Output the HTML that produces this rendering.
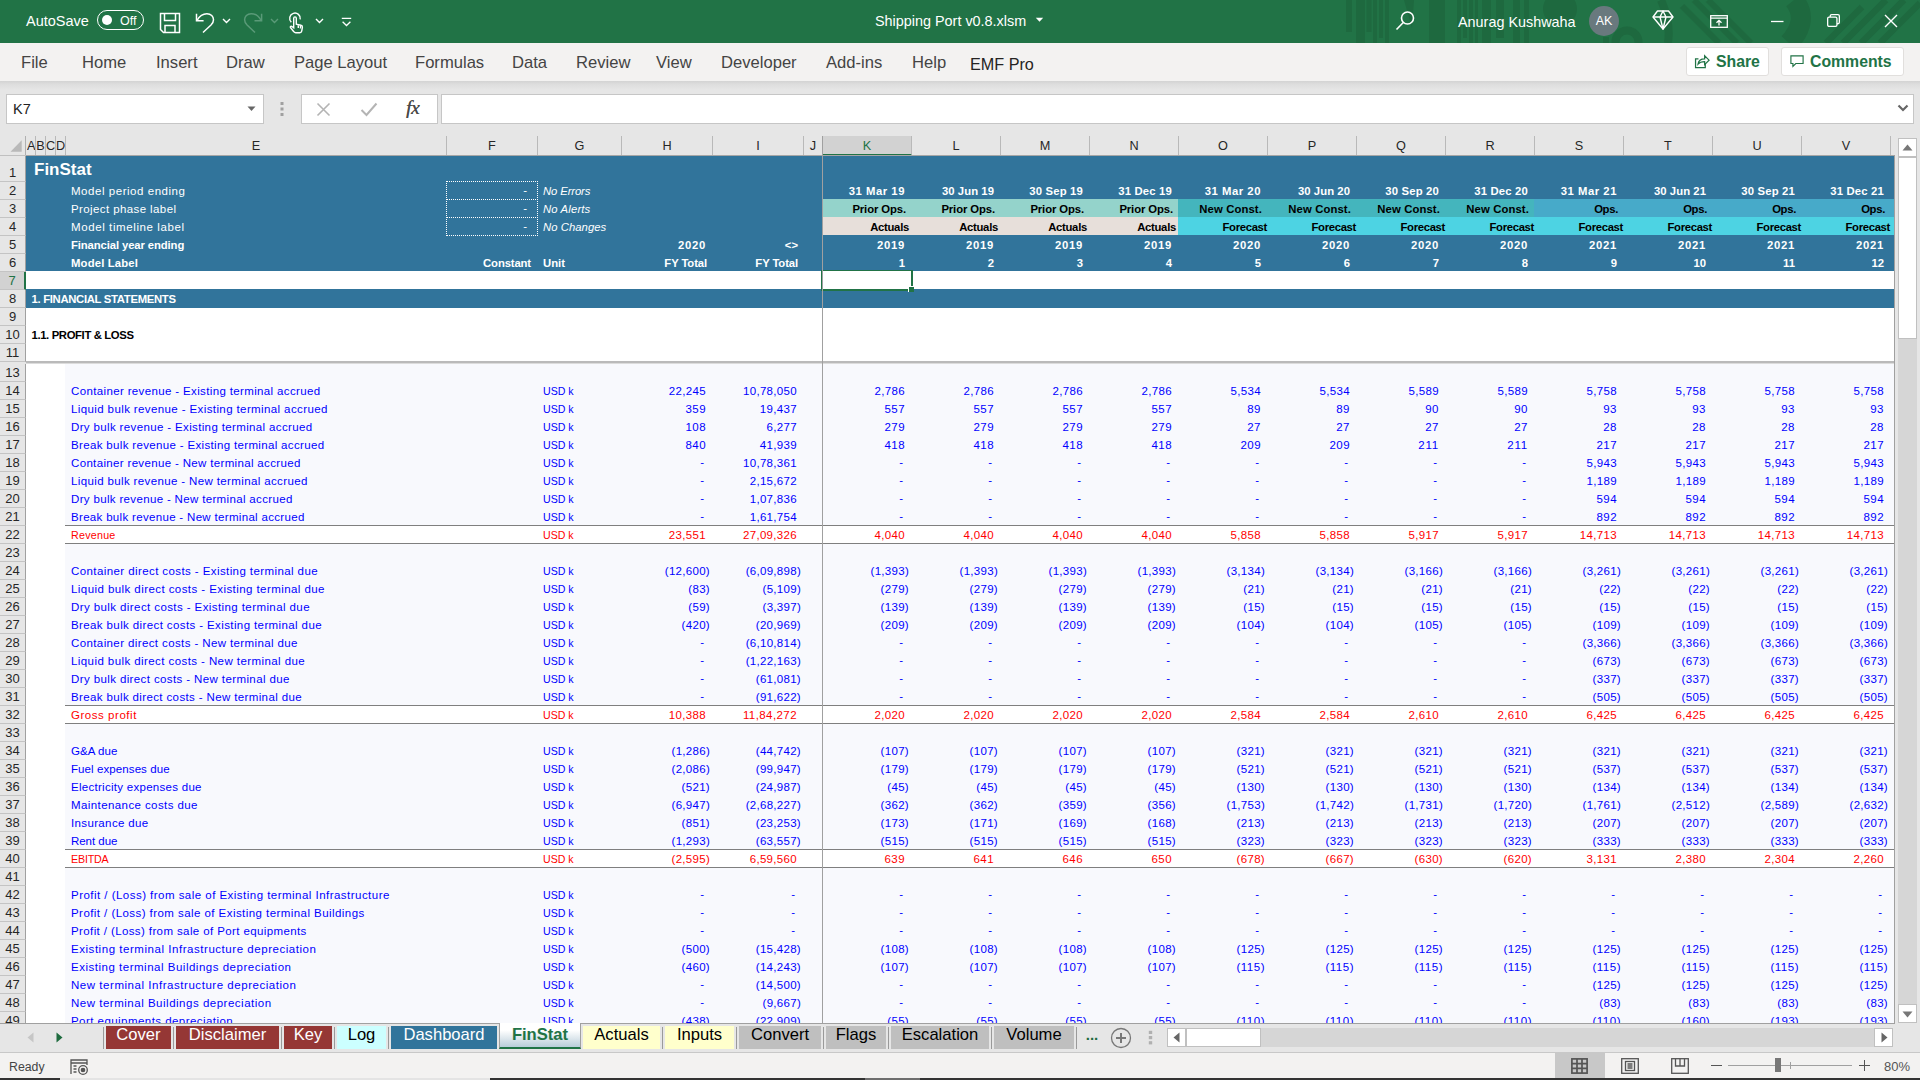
<!DOCTYPE html>
<html lang="en"><head><meta charset="utf-8"><title>Shipping Port v0.8.xlsm - Excel</title>
<style>
*{box-sizing:border-box;margin:0;padding:0}
html,body{width:1920px;height:1080px;overflow:hidden;background:#e6e6e6}
body{font-family:"Liberation Sans",sans-serif;color:#222}
#app{position:relative;width:1920px;height:1080px;overflow:hidden;background:#e6e6e6}
.abs{position:absolute}
/* title bar */
#title{position:absolute;left:0;top:0;width:1920px;height:43px;background:#217346;color:#fff;overflow:hidden}
#title .t{position:absolute;white-space:nowrap;font-size:15px;line-height:42px;top:1px}
/* ribbon tabs */
#ribbon{position:absolute;left:0;top:43px;width:1920px;height:38px;background:#f3f2f1}
#ribbon .tab{position:absolute;top:0;line-height:40px;font-size:16.6px;color:#444;white-space:nowrap}
#rshadow{position:absolute;left:0;top:81px;width:1920px;height:9px;background:linear-gradient(#d3d3d3,#dedede 40%,#e6e6e6)}
.btn{position:absolute;top:4px;height:29px;background:#fff;border:1px solid #e1dfdd;border-radius:3px;color:#217346;font-weight:bold;font-size:15.8px;line-height:28px;white-space:nowrap}
/* formula bar */
.box{position:absolute;top:94px;height:30px;background:#fff;border:1px solid #c6c6c6}
/* grid */
#grid{position:absolute;left:0;top:0;width:1920px;height:1024px;overflow:hidden}
#sheet{position:absolute;left:26px;top:155px;width:1868px;height:869px;background:#fff}
.ch{position:absolute;top:136px;height:19px;line-height:21px;text-align:center;font-size:12.7px;color:#262626;border-right:1px solid #b9b9b9;overflow:hidden;white-space:nowrap}
.ch.sel{background:#d2d2d2;color:#217346;border-bottom:2px solid #217346;height:20px}
.rh{position:absolute;left:0;width:26px;text-align:center;font-size:13px;color:#262626;border-bottom:1px solid #c4c4c4;border-right:1px solid #a0a0a0;background:#e6e6e6;overflow:hidden}
.rh.sel{background:#d2d2d2;color:#217346;border-right:2px solid #217346}
.hb{position:absolute;background:#31749b}
.lb{position:absolute;background:#f8f9fd}
.c{position:absolute;height:18px;line-height:18px;padding-top:1px;font-size:11.5px;white-space:nowrap;text-align:right;overflow:visible}
.c.l{text-align:left}
.w{color:#fff}.k{color:#000}.blu{color:#0000ff}.red{color:#ff0000}
.b{font-weight:bold;font-size:11.3px}
.i{font-style:italic;font-size:11.3px}
.u{font-size:10.6px}
.n2{font-size:10.7px}
.c.d{padding-top:0}
.r2{padding-right:2px}.r5{padding-right:5px}.r6{padding-right:6px}.r8{padding-right:8px}.r10{padding-right:10px}
.fin{font-weight:bold;font-size:17px;color:#fff;height:24px;line-height:24px}
.dot{position:absolute;border:1px dotted #fff}
.tot{position:absolute;left:65px;width:1829px;background:#fff;border-top:1px solid #7f7f7f;border-bottom:1px solid #7f7f7f;height:19px}
/* sheet tabs */
#tabs{position:absolute;left:0;top:1024px;width:1920px;height:29px;background:#e6e6e6;border-bottom:1px solid #c8c8c8}
.st{position:absolute;top:2px;height:23px;line-height:17px;font-size:16.6px;text-align:center;white-space:nowrap;color:#000}
.sep{position:absolute;top:3px;width:1px;height:22px;background:#9a9a9a}
#status{position:absolute;left:0;top:1053px;width:1920px;height:25px;background:#f3f2f1;font-size:13.5px;color:#444}
</style></head><body>
<div id="app">
<!-- TITLE BAR -->
<div id="title">
<svg class="abs" style="left:1300px;top:0" width="620" height="43" viewBox="0 0 620 43">
 <g fill="#1e693f">
  <rect x="46" y="0" width="6" height="32"/><rect x="56" y="0" width="9" height="43"/><rect x="66.500" y="0" width="5" height="32"/><rect x="73" y="0" width="4" height="43"/><rect x="79" y="0" width="4" height="38"/><rect x="85" y="0" width="4" height="43"/>
  <path d="M104 0h10l-2 28z"/>
  <rect x="129" y="0" width="16" height="43"/>
  <rect x="157" y="0" width="4" height="43"/><rect x="163" y="0" width="4" height="38"/><rect x="169" y="0" width="4" height="43"/><rect x="175" y="0" width="3" height="43"/>
  <rect x="182" y="0" width="9" height="43"/><rect x="196" y="0" width="8" height="38"/><rect x="213" y="0" width="7" height="43"/><rect x="224" y="0" width="5" height="43"/>
  <circle cx="260" cy="9" r="17"/>
  <rect x="303" y="37" width="6" height="6"/>
 </g>
 <g fill="none" stroke="#1e693f">
  <circle cx="327" cy="42" r="11.500" stroke-width="8"/>
  <path d="M361 0 Q371 22 368 43" stroke-width="8"/>
  <path d="M382 6 L419 43 M394 0 L437 43 M408 0 L451 43" stroke-width="6"/>
  <path d="M494 0 Q510 20 489 43" stroke-width="20"/>
  <path d="M526 43 L562 7 M543 43 L586 0 M561 43 L604 0 M580 43 L620 3" stroke-width="6.500"/>
 </g>
</svg>
<div class="t" style="left:26px;font-size:14.5px;top:0">AutoSave</div>
<div class="abs" style="left:97px;top:10px;width:47px;height:20px;border:1px solid #fff;border-radius:10px"></div>
<div class="abs" style="left:102px;top:15px;width:10px;height:10px;border-radius:5px;background:#fff"></div>
<div class="t" style="left:120px;font-size:12.5px;top:0">Off</div>
<!-- save -->
<svg class="abs" style="left:159px;top:12px" width="22" height="22" viewBox="0 0 22 22" fill="none" stroke="#fff" stroke-width="1.5"><path d="M1.5 1.5h19v19H4.5l-3-3z"/><path d="M5.5 1.5v7h11v-7M6 20.5v-7h10v7"/></svg>
<!-- undo -->
<svg class="abs" style="left:194px;top:11px" width="22" height="24" viewBox="0 0 22 24" fill="none" stroke="#fff" stroke-width="1.5"><path d="M2.500 2.700V9.800H9.600"/><path d="M3 9.300C5.500 5 9 2.700 12.900 2.700c4.100 0 6.600 2.800 6.600 6 0 2.300-1 3.800-2.500 5.300L9 21.500"/></svg>
<svg class="abs" style="left:222px;top:18px" width="9" height="6" viewBox="0 0 9 6" fill="none" stroke="#fff" stroke-width="1.4"><path d="M1 1l3.5 3.5L8 1"/></svg>
<!-- redo (disabled) -->
<svg class="abs" style="left:243px;top:11px" width="22" height="24" viewBox="0 0 22 24" fill="none" stroke="#5a9a78" stroke-width="1.5"><path d="M18.600 2.700V9.800H11.500"/><path d="M18.100 9.300C15.600 5 12.100 2.700 8.200 2.700c-4.100 0-6.600 2.800-6.600 6 0 2.300 1 3.800 2.500 5.300L12 21.500"/></svg>
<svg class="abs" style="left:270px;top:18px" width="9" height="6" viewBox="0 0 9 6" fill="none" stroke="#5a9a78" stroke-width="1.4"><path d="M1 1l3.500 3.500L8 1"/></svg>
<!-- touch -->
<svg class="abs" style="left:287px;top:11px" width="20" height="24" viewBox="0 0 20 24" fill="none" stroke="#fff" stroke-width="1.400"><path d="M4.300 11.200A5.300 5.300 0 1 1 13.200 8.300"/><path d="M6.700 16.800V7.200a1.300 1.300 0 0 1 2.600 0v6l4.600 1c1.200.300 1.700 1 1.500 2.200l-.700 3.800c-.200 1-.800 1.500-1.800 1.500H8.700c-.800 0-1.400-.300-1.900-1l-3.300-4.200c-.600-.800.300-1.700 1.100-1.200z"/><path d="M11.300 14.200v2.800M13.500 14.800v2.600"/></svg>
<svg class="abs" style="left:315px;top:18px" width="9" height="6" viewBox="0 0 9 6" fill="none" stroke="#fff" stroke-width="1.400"><path d="M1 1l3.500 3.500L8 1"/></svg>
<!-- customize -->
<svg class="abs" style="left:341px;top:16px" width="11" height="11" viewBox="0 0 11 11" fill="none" stroke="#fff" stroke-width="1.300"><path d="M0.800 2.400h9.400M1.600 5.800l3.900 3.700 3.900-3.700"/></svg>
<div class="t" style="left:875px;font-size:14.4px;top:0">Shipping Port v0.8.xlsm</div>
<svg class="abs" style="left:1035px;top:17px" width="9" height="6" viewBox="0 0 9 6"><path d="M0.800 0.800h7.400L4.500 4.800z" fill="#fff"/></svg>
<!-- search -->
<svg class="abs" style="left:1395px;top:10px" width="22" height="22" viewBox="0 0 22 22" fill="none" stroke="#fff" stroke-width="1.600"><circle cx="12.500" cy="8" r="6"/><path d="M8.300 12.500L1.500 19.500"/></svg>
<div class="t" style="left:1458px;font-size:14.4px">Anurag Kushwaha</div>
<div class="abs" style="left:1589px;top:6px;width:30px;height:30px;border-radius:15px;background:#69797e;color:#fff;text-align:center;line-height:30px;font-size:12.5px">AK</div>
<!-- diamond -->
<svg class="abs" style="left:1652px;top:10px" width="22" height="20" viewBox="0 0 22 20" fill="none" stroke="#fff" stroke-width="1.400" stroke-linejoin="round"><path d="M5.500 1h11l4.500 6L11 19 1 7z"/><path d="M1 7h20M8 7l3-6 3 6-3 12z"/></svg>
<!-- ribbon display -->
<svg class="abs" style="left:1710px;top:15px" width="18" height="13" viewBox="0 0 18 13" fill="none" stroke="#fff" stroke-width="1.300"><rect x="0.700" y="0.700" width="16.600" height="11.600"/><path d="M0.700 3.200h16.600M9 10.500V5.500M6.500 7.800L9 5.300l2.500 2.500"/></svg>
<!-- window controls -->
<svg class="abs" style="left:1771px;top:20px" width="13" height="3" viewBox="0 0 13 3"><path d="M0 1.500h12.500" stroke="#fff" stroke-width="1.300"/></svg>
<svg class="abs" style="left:1827px;top:14px" width="13" height="13" viewBox="0 0 14 14" fill="none" stroke="#fff" stroke-width="1.400"><rect x="0.700" y="3.300" width="10" height="10" rx="1.500"/><path d="M3.500 3.300V2.200c0-.8.700-1.500 1.500-1.500h6.800c.800 0 1.500.700 1.500 1.500V9c0 .800-.700 1.500-1.500 1.500h-1.100"/></svg>
<svg class="abs" style="left:1884px;top:14px" width="14" height="14" viewBox="0 0 14 14" stroke="#fff" stroke-width="1.400"><path d="M1 1l12 12M13 1L1 13"/></svg>
</div>
<!-- RIBBON TABS -->
<div id="ribbon">
<div class="tab" style="left:21px">File</div>
<div class="tab" style="left:82px">Home</div>
<div class="tab" style="left:156px">Insert</div>
<div class="tab" style="left:226px">Draw</div>
<div class="tab" style="left:294px">Page Layout</div>
<div class="tab" style="left:415px">Formulas</div>
<div class="tab" style="left:512px">Data</div>
<div class="tab" style="left:576px">Review</div>
<div class="tab" style="left:656px">View</div>
<div class="tab" style="left:721px">Developer</div>
<div class="tab" style="left:826px">Add-ins</div>
<div class="tab" style="left:912px">Help</div>
<div class="tab" style="left:970px;color:#252423;top:1px;font-size:16.2px">EMF Pro</div>
<div class="btn" style="left:1686px;width:83px;padding-left:29px">Share</div>
<svg class="abs" style="left:1694px;top:11px" width="16" height="15" viewBox="0 0 18 17" fill="none" stroke="#217346" stroke-width="1.400"><path d="M5 5.500H1.700v10h11v-4.300"/><path d="M4.500 11.500c.5-4 3.500-6 7.500-6V2l5 5-5 5V8.700c-3 0-5.500.500-7.500 2.800z"/></svg>
<div class="btn" style="left:1781px;width:123px;padding-left:28px">Comments</div>
<svg class="abs" style="left:1790px;top:12px" width="14" height="13" viewBox="0 0 17 16" fill="none" stroke="#217346" stroke-width="1.400"><path d="M1 1h15v9.500H7L3.500 14v-3.500H1z"/></svg>
</div>
<div id="rshadow"></div>
<!-- FORMULA BAR -->
<div class="box" style="left:6px;width:258px"></div>
<div class="abs" style="left:13px;top:95px;line-height:28px;font-size:14.5px;color:#222">K7</div>
<svg class="abs" style="left:247px;top:106px" width="9" height="6" viewBox="0 0 9 6"><path d="M0.500 0.500h8L4.500 5z" fill="#666"/></svg>
<svg class="abs" style="left:280px;top:101px" width="4" height="16" viewBox="0 0 4 16" fill="#a0a0a0"><rect x="0.500" y="1" width="3" height="3"/><rect x="0.500" y="6.500" width="3" height="3"/><rect x="0.500" y="12" width="3" height="3"/></svg>
<div class="box" style="left:301px;width:137px"></div>
<svg class="abs" style="left:316px;top:102px" width="15" height="15" viewBox="0 0 15 15" stroke="#b4b4b4" stroke-width="1.600"><path d="M1.500 1.500l12 12M13.500 1.500l-12 12"/></svg>
<svg class="abs" style="left:360px;top:102px" width="18" height="15" viewBox="0 0 18 15" fill="none" stroke="#b4b4b4" stroke-width="2"><path d="M1.500 8l5 5L16.500 1.500"/></svg>
<div class="abs" style="left:406px;top:94px;line-height:27px;font-size:19.5px;font-style:italic;font-family:'Liberation Serif',serif;color:#4a4a4a;letter-spacing:-0.5px;text-shadow:0.3px 0 0 #4a4a4a">fx</div>
<div class="box" style="left:441px;width:1473px"></div>
<svg class="abs" style="left:1897px;top:104px" width="12" height="9" viewBox="0 0 12 9" fill="none" stroke="#666" stroke-width="2.200"><path d="M1.500 1.500l4.500 4.500 4.500-4.500"/></svg>
<div id="grid">
<div id="sheet"></div>
<div class="ch" style="left:27px;width:9px">A</div>
<div class="ch" style="left:36px;width:10px">B</div>
<div class="ch" style="left:46px;width:10px">C</div>
<div class="ch" style="left:56px;width:10px">D</div>
<div class="ch" style="left:66px;width:381px">E</div>
<div class="ch" style="left:447px;width:91px">F</div>
<div class="ch" style="left:538px;width:84px">G</div>
<div class="ch" style="left:622px;width:91px">H</div>
<div class="ch" style="left:713px;width:91px">I</div>
<div class="ch" style="left:804px;width:19px">J</div>
<div class="ch sel" style="left:823px;width:89px">K</div>
<div class="ch" style="left:912px;width:89px">L</div>
<div class="ch" style="left:1001px;width:89px">M</div>
<div class="ch" style="left:1090px;width:89px">N</div>
<div class="ch" style="left:1179px;width:89px">O</div>
<div class="ch" style="left:1268px;width:89px">P</div>
<div class="ch" style="left:1357px;width:89px">Q</div>
<div class="ch" style="left:1446px;width:89px">R</div>
<div class="ch" style="left:1535px;width:89px">S</div>
<div class="ch" style="left:1624px;width:89px">T</div>
<div class="ch" style="left:1713px;width:89px">U</div>
<div class="ch" style="left:1802px;width:89px">V</div>
<div class="rh" style="top:156px;height:26px;line-height:34px">1</div>
<div class="rh" style="top:182px;height:18px;line-height:18px">2</div>
<div class="rh" style="top:200px;height:18px;line-height:18px">3</div>
<div class="rh" style="top:218px;height:18px;line-height:18px">4</div>
<div class="rh" style="top:236px;height:18px;line-height:18px">5</div>
<div class="rh" style="top:254px;height:18px;line-height:18px">6</div>
<div class="rh sel" style="top:272px;height:18px;line-height:18px">7</div>
<div class="rh" style="top:290px;height:18px;line-height:18px">8</div>
<div class="rh" style="top:308px;height:18px;line-height:18px">9</div>
<div class="rh" style="top:326px;height:18px;line-height:18px">10</div>
<div class="rh" style="top:344px;height:18px;line-height:18px">11</div>
<div class="rh" style="top:364px;height:18px;line-height:18px">13</div>
<div class="rh" style="top:382px;height:18px;line-height:18px">14</div>
<div class="rh" style="top:400px;height:18px;line-height:18px">15</div>
<div class="rh" style="top:418px;height:18px;line-height:18px">16</div>
<div class="rh" style="top:436px;height:18px;line-height:18px">17</div>
<div class="rh" style="top:454px;height:18px;line-height:18px">18</div>
<div class="rh" style="top:472px;height:18px;line-height:18px">19</div>
<div class="rh" style="top:490px;height:18px;line-height:18px">20</div>
<div class="rh" style="top:508px;height:18px;line-height:18px">21</div>
<div class="rh" style="top:526px;height:18px;line-height:18px">22</div>
<div class="rh" style="top:544px;height:18px;line-height:18px">23</div>
<div class="rh" style="top:562px;height:18px;line-height:18px">24</div>
<div class="rh" style="top:580px;height:18px;line-height:18px">25</div>
<div class="rh" style="top:598px;height:18px;line-height:18px">26</div>
<div class="rh" style="top:616px;height:18px;line-height:18px">27</div>
<div class="rh" style="top:634px;height:18px;line-height:18px">28</div>
<div class="rh" style="top:652px;height:18px;line-height:18px">29</div>
<div class="rh" style="top:670px;height:18px;line-height:18px">30</div>
<div class="rh" style="top:688px;height:18px;line-height:18px">31</div>
<div class="rh" style="top:706px;height:18px;line-height:18px">32</div>
<div class="rh" style="top:724px;height:18px;line-height:18px">33</div>
<div class="rh" style="top:742px;height:18px;line-height:18px">34</div>
<div class="rh" style="top:760px;height:18px;line-height:18px">35</div>
<div class="rh" style="top:778px;height:18px;line-height:18px">36</div>
<div class="rh" style="top:796px;height:18px;line-height:18px">37</div>
<div class="rh" style="top:814px;height:18px;line-height:18px">38</div>
<div class="rh" style="top:832px;height:18px;line-height:18px">39</div>
<div class="rh" style="top:850px;height:18px;line-height:18px">40</div>
<div class="rh" style="top:868px;height:18px;line-height:18px">41</div>
<div class="rh" style="top:886px;height:18px;line-height:18px">42</div>
<div class="rh" style="top:904px;height:18px;line-height:18px">43</div>
<div class="rh" style="top:922px;height:18px;line-height:18px">44</div>
<div class="rh" style="top:940px;height:18px;line-height:18px">45</div>
<div class="rh" style="top:958px;height:18px;line-height:18px">46</div>
<div class="rh" style="top:976px;height:18px;line-height:18px">47</div>
<div class="rh" style="top:994px;height:18px;line-height:18px">48</div>
<div class="rh" style="top:1012px;height:18px;line-height:18px">49</div>
<svg style="position:absolute;left:10px;top:140px" width="12" height="12" viewBox="0 0 12 12"><path d="M11.700 0.300v11.400H0.500z" fill="#b9b9b9"/></svg>
<div style="position:absolute;left:25px;top:136px;width:1px;height:19px;background:#b0b0b0"></div>
<div style="position:absolute;left:0;top:155px;width:26px;height:1px;background:#c0c0c0"></div>
<div style="position:absolute;left:26px;top:155px;width:1869px;height:1px;background:#a6a6a6"></div>
<div class="hb" style="left:26px;top:156px;width:1868px;height:115px"></div>
<div class="hb" style="left:26px;top:289px;width:1868px;height:19px"></div>
<div class="lb" style="left:65px;top:363px;width:1829px;height:661px"></div>
<div style="position:absolute;left:822px;top:199px;width:356px;height:18px;background:#94d3cb"></div>
<div style="position:absolute;left:1178px;top:199px;width:356px;height:18px;background:#44b5bd"></div>
<div style="position:absolute;left:1534px;top:199px;width:360px;height:18px;background:#47aac9"></div>
<div style="position:absolute;left:822px;top:217px;width:356px;height:18px;background:#e7dfda"></div>
<div style="position:absolute;left:1178px;top:217px;width:716px;height:18px;background:#4dd3e3"></div>
<div class="c l fin" style="left:34px;top:157px">FinStat</div>
<div class="c l w" style="left:71px;top:181px;letter-spacing:0.54px">Model period ending</div>
<div class="c l w" style="left:71px;top:199px;letter-spacing:0.4px">Project phase label</div>
<div class="c l w" style="left:71px;top:217px;letter-spacing:0.6px">Model timeline label</div>
<div class="c l w b" style="left:71px;top:235px;letter-spacing:-0.11px">Financial year ending</div>
<div class="c l w b" style="left:71px;top:253px;letter-spacing:0.16px">Model Label</div>
<div class="c l w i" style="left:543px;top:181px;letter-spacing:-0.12px">No Errors</div>
<div class="c l w i" style="left:543px;top:199px;letter-spacing:0.15px">No Alerts</div>
<div class="c l w i" style="left:543px;top:217px;letter-spacing:0.05px">No Changes</div>
<div class="c l w b" style="left:543px;top:253px;letter-spacing:0.01px">Unit</div>
<div class="c w b r6" style="left:446px;top:253px;width:91px;letter-spacing:-0.13px">Constant</div>
<div class="c w r10 d" style="left:446px;top:181px;width:91px">-</div>
<div class="dot" style="left:446px;top:181px;width:92px;height:19px"></div>
<div class="c w r10 d" style="left:446px;top:199px;width:91px">-</div>
<div class="dot" style="left:446px;top:199px;width:92px;height:19px"></div>
<div class="c w r10 d" style="left:446px;top:217px;width:91px">-</div>
<div class="dot" style="left:446px;top:217px;width:92px;height:19px"></div>
<div class="c w b r6" style="left:621px;top:235px;width:91px;letter-spacing:0.73px">2020</div>
<div class="c w b r5" style="left:712px;top:235px;width:91px">&lt;&gt;</div>
<div class="c w b r5" style="left:621px;top:253px;width:91px;letter-spacing:-0.11px">FY Total</div>
<div class="c w b r5" style="left:712px;top:253px;width:91px;letter-spacing:-0.11px">FY Total</div>
<div class="c w b r6" style="left:822px;top:181px;width:89px;letter-spacing:0.53px">31 Mar 19</div>
<div class="c k b r5" style="left:822px;top:199px;width:89px;letter-spacing:-0.1px">Prior Ops.</div>
<div class="c k b r2" style="left:822px;top:217px;width:89px;letter-spacing:-0.28px">Actuals</div>
<div class="c w b r6" style="left:822px;top:235px;width:89px;letter-spacing:0.73px">2019</div>
<div class="c w b r6" style="left:822px;top:253px;width:89px">1</div>
<div class="c w b r6" style="left:911px;top:181px;width:89px;letter-spacing:0.06px">30 Jun 19</div>
<div class="c k b r5" style="left:911px;top:199px;width:89px;letter-spacing:-0.1px">Prior Ops.</div>
<div class="c k b r2" style="left:911px;top:217px;width:89px;letter-spacing:-0.28px">Actuals</div>
<div class="c w b r6" style="left:911px;top:235px;width:89px;letter-spacing:0.73px">2019</div>
<div class="c w b r6" style="left:911px;top:253px;width:89px">2</div>
<div class="c w b r6" style="left:1000px;top:181px;width:89px;letter-spacing:0.18px">30 Sep 19</div>
<div class="c k b r5" style="left:1000px;top:199px;width:89px;letter-spacing:-0.1px">Prior Ops.</div>
<div class="c k b r2" style="left:1000px;top:217px;width:89px;letter-spacing:-0.28px">Actuals</div>
<div class="c w b r6" style="left:1000px;top:235px;width:89px;letter-spacing:0.73px">2019</div>
<div class="c w b r6" style="left:1000px;top:253px;width:89px">3</div>
<div class="c w b r6" style="left:1089px;top:181px;width:89px;letter-spacing:0.18px">31 Dec 19</div>
<div class="c k b r5" style="left:1089px;top:199px;width:89px;letter-spacing:-0.1px">Prior Ops.</div>
<div class="c k b r2" style="left:1089px;top:217px;width:89px;letter-spacing:-0.28px">Actuals</div>
<div class="c w b r6" style="left:1089px;top:235px;width:89px;letter-spacing:0.73px">2019</div>
<div class="c w b r6" style="left:1089px;top:253px;width:89px">4</div>
<div class="c w b r6" style="left:1178px;top:181px;width:89px;letter-spacing:0.53px">31 Mar 20</div>
<div class="c k b r5" style="left:1178px;top:199px;width:89px;letter-spacing:0.12px">New Const.</div>
<div class="c k b r3" style="left:1178px;top:217px;width:89px;letter-spacing:-0.32px">Forecast</div>
<div class="c w b r6" style="left:1178px;top:235px;width:89px;letter-spacing:0.73px">2020</div>
<div class="c w b r6" style="left:1178px;top:253px;width:89px">5</div>
<div class="c w b r6" style="left:1267px;top:181px;width:89px;letter-spacing:0.06px">30 Jun 20</div>
<div class="c k b r5" style="left:1267px;top:199px;width:89px;letter-spacing:0.12px">New Const.</div>
<div class="c k b r3" style="left:1267px;top:217px;width:89px;letter-spacing:-0.32px">Forecast</div>
<div class="c w b r6" style="left:1267px;top:235px;width:89px;letter-spacing:0.73px">2020</div>
<div class="c w b r6" style="left:1267px;top:253px;width:89px">6</div>
<div class="c w b r6" style="left:1356px;top:181px;width:89px;letter-spacing:0.18px">30 Sep 20</div>
<div class="c k b r5" style="left:1356px;top:199px;width:89px;letter-spacing:0.12px">New Const.</div>
<div class="c k b r3" style="left:1356px;top:217px;width:89px;letter-spacing:-0.32px">Forecast</div>
<div class="c w b r6" style="left:1356px;top:235px;width:89px;letter-spacing:0.73px">2020</div>
<div class="c w b r6" style="left:1356px;top:253px;width:89px">7</div>
<div class="c w b r6" style="left:1445px;top:181px;width:89px;letter-spacing:0.18px">31 Dec 20</div>
<div class="c k b r5" style="left:1445px;top:199px;width:89px;letter-spacing:0.12px">New Const.</div>
<div class="c k b r3" style="left:1445px;top:217px;width:89px;letter-spacing:-0.32px">Forecast</div>
<div class="c w b r6" style="left:1445px;top:235px;width:89px;letter-spacing:0.73px">2020</div>
<div class="c w b r6" style="left:1445px;top:253px;width:89px">8</div>
<div class="c w b r6" style="left:1534px;top:181px;width:89px;letter-spacing:0.53px">31 Mar 21</div>
<div class="c k b r5" style="left:1534px;top:199px;width:89px;letter-spacing:-0.32px">Ops.</div>
<div class="c k b r3" style="left:1534px;top:217px;width:89px;letter-spacing:-0.32px">Forecast</div>
<div class="c w b r6" style="left:1534px;top:235px;width:89px;letter-spacing:0.73px">2021</div>
<div class="c w b r6" style="left:1534px;top:253px;width:89px">9</div>
<div class="c w b r6" style="left:1623px;top:181px;width:89px;letter-spacing:0.06px">30 Jun 21</div>
<div class="c k b r5" style="left:1623px;top:199px;width:89px;letter-spacing:-0.32px">Ops.</div>
<div class="c k b r3" style="left:1623px;top:217px;width:89px;letter-spacing:-0.32px">Forecast</div>
<div class="c w b r6" style="left:1623px;top:235px;width:89px;letter-spacing:0.73px">2021</div>
<div class="c w b r6" style="left:1623px;top:253px;width:89px">10</div>
<div class="c w b r6" style="left:1712px;top:181px;width:89px;letter-spacing:0.18px">30 Sep 21</div>
<div class="c k b r5" style="left:1712px;top:199px;width:89px;letter-spacing:-0.32px">Ops.</div>
<div class="c k b r3" style="left:1712px;top:217px;width:89px;letter-spacing:-0.32px">Forecast</div>
<div class="c w b r6" style="left:1712px;top:235px;width:89px;letter-spacing:0.73px">2021</div>
<div class="c w b r6" style="left:1712px;top:253px;width:89px">11</div>
<div class="c w b r6" style="left:1801px;top:181px;width:89px;letter-spacing:0.18px">31 Dec 21</div>
<div class="c k b r5" style="left:1801px;top:199px;width:89px;letter-spacing:-0.32px">Ops.</div>
<div class="c k b r3" style="left:1801px;top:217px;width:89px;letter-spacing:-0.32px">Forecast</div>
<div class="c w b r6" style="left:1801px;top:235px;width:89px;letter-spacing:0.73px">2021</div>
<div class="c w b r6" style="left:1801px;top:253px;width:89px">12</div>
<div class="c l b" style="left:31.5px;top:289px;color:#fff;letter-spacing:-0.31px">1. FINANCIAL STATEMENTS</div>
<div class="c l k b" style="left:31.5px;top:325px;letter-spacing:-0.36px">1.1. PROFIT &amp; LOSS</div>
<div class="c l blu" style="left:71px;top:381px;letter-spacing:0.36px">Container revenue - Existing terminal accrued</div>
<div class="c l blu u" style="left:543px;top:381px">USD k</div>
<div class="c blu r6" style="left:621px;top:381px;width:91px;letter-spacing:0.35px">22,245</div>
<div class="c blu r6" style="left:712px;top:381px;width:91px;letter-spacing:0.32px">10,78,050</div>
<div class="c blu r6" style="left:822px;top:381px;width:89px;letter-spacing:0.35px">2,786</div>
<div class="c blu r6" style="left:911px;top:381px;width:89px;letter-spacing:0.35px">2,786</div>
<div class="c blu r6" style="left:1000px;top:381px;width:89px;letter-spacing:0.35px">2,786</div>
<div class="c blu r6" style="left:1089px;top:381px;width:89px;letter-spacing:0.35px">2,786</div>
<div class="c blu r6" style="left:1178px;top:381px;width:89px;letter-spacing:0.35px">5,534</div>
<div class="c blu r6" style="left:1267px;top:381px;width:89px;letter-spacing:0.35px">5,534</div>
<div class="c blu r6" style="left:1356px;top:381px;width:89px;letter-spacing:0.35px">5,589</div>
<div class="c blu r6" style="left:1445px;top:381px;width:89px;letter-spacing:0.35px">5,589</div>
<div class="c blu r6" style="left:1534px;top:381px;width:89px;letter-spacing:0.35px">5,758</div>
<div class="c blu r6" style="left:1623px;top:381px;width:89px;letter-spacing:0.35px">5,758</div>
<div class="c blu r6" style="left:1712px;top:381px;width:89px;letter-spacing:0.35px">5,758</div>
<div class="c blu r6" style="left:1801px;top:381px;width:89px;letter-spacing:0.35px">5,758</div>
<div class="c l blu" style="left:71px;top:399px;letter-spacing:0.39px">Liquid bulk revenue - Existing terminal accrued</div>
<div class="c l blu u" style="left:543px;top:399px">USD k</div>
<div class="c blu r6" style="left:621px;top:399px;width:91px;letter-spacing:0.44px">359</div>
<div class="c blu r6" style="left:712px;top:399px;width:91px;letter-spacing:0.35px">19,437</div>
<div class="c blu r6" style="left:822px;top:399px;width:89px;letter-spacing:0.44px">557</div>
<div class="c blu r6" style="left:911px;top:399px;width:89px;letter-spacing:0.44px">557</div>
<div class="c blu r6" style="left:1000px;top:399px;width:89px;letter-spacing:0.44px">557</div>
<div class="c blu r6" style="left:1089px;top:399px;width:89px;letter-spacing:0.44px">557</div>
<div class="c blu r6" style="left:1178px;top:399px;width:89px;letter-spacing:0.48px">89</div>
<div class="c blu r6" style="left:1267px;top:399px;width:89px;letter-spacing:0.48px">89</div>
<div class="c blu r6" style="left:1356px;top:399px;width:89px;letter-spacing:0.48px">90</div>
<div class="c blu r6" style="left:1445px;top:399px;width:89px;letter-spacing:0.48px">90</div>
<div class="c blu r6" style="left:1534px;top:399px;width:89px;letter-spacing:0.48px">93</div>
<div class="c blu r6" style="left:1623px;top:399px;width:89px;letter-spacing:0.48px">93</div>
<div class="c blu r6" style="left:1712px;top:399px;width:89px;letter-spacing:0.48px">93</div>
<div class="c blu r6" style="left:1801px;top:399px;width:89px;letter-spacing:0.48px">93</div>
<div class="c l blu" style="left:71px;top:417px;letter-spacing:0.36px">Dry bulk revenue - Existing terminal accrued</div>
<div class="c l blu u" style="left:543px;top:417px">USD k</div>
<div class="c blu r6" style="left:621px;top:417px;width:91px;letter-spacing:0.44px">108</div>
<div class="c blu r6" style="left:712px;top:417px;width:91px;letter-spacing:0.35px">6,277</div>
<div class="c blu r6" style="left:822px;top:417px;width:89px;letter-spacing:0.44px">279</div>
<div class="c blu r6" style="left:911px;top:417px;width:89px;letter-spacing:0.44px">279</div>
<div class="c blu r6" style="left:1000px;top:417px;width:89px;letter-spacing:0.44px">279</div>
<div class="c blu r6" style="left:1089px;top:417px;width:89px;letter-spacing:0.44px">279</div>
<div class="c blu r6" style="left:1178px;top:417px;width:89px;letter-spacing:0.48px">27</div>
<div class="c blu r6" style="left:1267px;top:417px;width:89px;letter-spacing:0.48px">27</div>
<div class="c blu r6" style="left:1356px;top:417px;width:89px;letter-spacing:0.48px">27</div>
<div class="c blu r6" style="left:1445px;top:417px;width:89px;letter-spacing:0.48px">27</div>
<div class="c blu r6" style="left:1534px;top:417px;width:89px;letter-spacing:0.48px">28</div>
<div class="c blu r6" style="left:1623px;top:417px;width:89px;letter-spacing:0.48px">28</div>
<div class="c blu r6" style="left:1712px;top:417px;width:89px;letter-spacing:0.48px">28</div>
<div class="c blu r6" style="left:1801px;top:417px;width:89px;letter-spacing:0.48px">28</div>
<div class="c l blu" style="left:71px;top:435px;letter-spacing:0.34px">Break bulk revenue - Existing terminal accrued</div>
<div class="c l blu u" style="left:543px;top:435px">USD k</div>
<div class="c blu r6" style="left:621px;top:435px;width:91px;letter-spacing:0.44px">840</div>
<div class="c blu r6" style="left:712px;top:435px;width:91px;letter-spacing:0.35px">41,939</div>
<div class="c blu r6" style="left:822px;top:435px;width:89px;letter-spacing:0.44px">418</div>
<div class="c blu r6" style="left:911px;top:435px;width:89px;letter-spacing:0.44px">418</div>
<div class="c blu r6" style="left:1000px;top:435px;width:89px;letter-spacing:0.44px">418</div>
<div class="c blu r6" style="left:1089px;top:435px;width:89px;letter-spacing:0.44px">418</div>
<div class="c blu r6" style="left:1178px;top:435px;width:89px;letter-spacing:0.44px">209</div>
<div class="c blu r6" style="left:1267px;top:435px;width:89px;letter-spacing:0.44px">209</div>
<div class="c blu r6" style="left:1356px;top:435px;width:89px;letter-spacing:0.77px">211</div>
<div class="c blu r6" style="left:1445px;top:435px;width:89px;letter-spacing:0.77px">211</div>
<div class="c blu r6" style="left:1534px;top:435px;width:89px;letter-spacing:0.44px">217</div>
<div class="c blu r6" style="left:1623px;top:435px;width:89px;letter-spacing:0.44px">217</div>
<div class="c blu r6" style="left:1712px;top:435px;width:89px;letter-spacing:0.44px">217</div>
<div class="c blu r6" style="left:1801px;top:435px;width:89px;letter-spacing:0.44px">217</div>
<div class="c l blu" style="left:71px;top:453px;letter-spacing:0.34px">Container revenue - New terminal accrued</div>
<div class="c l blu u" style="left:543px;top:453px">USD k</div>
<div class="c blu r8 d" style="left:621px;top:453px;width:91px">-</div>
<div class="c blu r6" style="left:712px;top:453px;width:91px;letter-spacing:0.32px">10,78,361</div>
<div class="c blu r8 d" style="left:822px;top:453px;width:89px">-</div>
<div class="c blu r8 d" style="left:911px;top:453px;width:89px">-</div>
<div class="c blu r8 d" style="left:1000px;top:453px;width:89px">-</div>
<div class="c blu r8 d" style="left:1089px;top:453px;width:89px">-</div>
<div class="c blu r8 d" style="left:1178px;top:453px;width:89px">-</div>
<div class="c blu r8 d" style="left:1267px;top:453px;width:89px">-</div>
<div class="c blu r8 d" style="left:1356px;top:453px;width:89px">-</div>
<div class="c blu r8 d" style="left:1445px;top:453px;width:89px">-</div>
<div class="c blu r6" style="left:1534px;top:453px;width:89px;letter-spacing:0.35px">5,943</div>
<div class="c blu r6" style="left:1623px;top:453px;width:89px;letter-spacing:0.35px">5,943</div>
<div class="c blu r6" style="left:1712px;top:453px;width:89px;letter-spacing:0.35px">5,943</div>
<div class="c blu r6" style="left:1801px;top:453px;width:89px;letter-spacing:0.35px">5,943</div>
<div class="c l blu" style="left:71px;top:471px;letter-spacing:0.37px">Liquid bulk revenue - New terminal accrued</div>
<div class="c l blu u" style="left:543px;top:471px">USD k</div>
<div class="c blu r8 d" style="left:621px;top:471px;width:91px">-</div>
<div class="c blu r6" style="left:712px;top:471px;width:91px;letter-spacing:0.32px">2,15,672</div>
<div class="c blu r8 d" style="left:822px;top:471px;width:89px">-</div>
<div class="c blu r8 d" style="left:911px;top:471px;width:89px">-</div>
<div class="c blu r8 d" style="left:1000px;top:471px;width:89px">-</div>
<div class="c blu r8 d" style="left:1089px;top:471px;width:89px">-</div>
<div class="c blu r8 d" style="left:1178px;top:471px;width:89px">-</div>
<div class="c blu r8 d" style="left:1267px;top:471px;width:89px">-</div>
<div class="c blu r8 d" style="left:1356px;top:471px;width:89px">-</div>
<div class="c blu r8 d" style="left:1445px;top:471px;width:89px">-</div>
<div class="c blu r6" style="left:1534px;top:471px;width:89px;letter-spacing:0.35px">1,189</div>
<div class="c blu r6" style="left:1623px;top:471px;width:89px;letter-spacing:0.35px">1,189</div>
<div class="c blu r6" style="left:1712px;top:471px;width:89px;letter-spacing:0.35px">1,189</div>
<div class="c blu r6" style="left:1801px;top:471px;width:89px;letter-spacing:0.35px">1,189</div>
<div class="c l blu" style="left:71px;top:489px;letter-spacing:0.34px">Dry bulk revenue - New terminal accrued</div>
<div class="c l blu u" style="left:543px;top:489px">USD k</div>
<div class="c blu r8 d" style="left:621px;top:489px;width:91px">-</div>
<div class="c blu r6" style="left:712px;top:489px;width:91px;letter-spacing:0.32px">1,07,836</div>
<div class="c blu r8 d" style="left:822px;top:489px;width:89px">-</div>
<div class="c blu r8 d" style="left:911px;top:489px;width:89px">-</div>
<div class="c blu r8 d" style="left:1000px;top:489px;width:89px">-</div>
<div class="c blu r8 d" style="left:1089px;top:489px;width:89px">-</div>
<div class="c blu r8 d" style="left:1178px;top:489px;width:89px">-</div>
<div class="c blu r8 d" style="left:1267px;top:489px;width:89px">-</div>
<div class="c blu r8 d" style="left:1356px;top:489px;width:89px">-</div>
<div class="c blu r8 d" style="left:1445px;top:489px;width:89px">-</div>
<div class="c blu r6" style="left:1534px;top:489px;width:89px;letter-spacing:0.44px">594</div>
<div class="c blu r6" style="left:1623px;top:489px;width:89px;letter-spacing:0.44px">594</div>
<div class="c blu r6" style="left:1712px;top:489px;width:89px;letter-spacing:0.44px">594</div>
<div class="c blu r6" style="left:1801px;top:489px;width:89px;letter-spacing:0.44px">594</div>
<div class="c l blu" style="left:71px;top:507px;letter-spacing:0.32px">Break bulk revenue - New terminal accrued</div>
<div class="c l blu u" style="left:543px;top:507px">USD k</div>
<div class="c blu r8 d" style="left:621px;top:507px;width:91px">-</div>
<div class="c blu r6" style="left:712px;top:507px;width:91px;letter-spacing:0.32px">1,61,754</div>
<div class="c blu r8 d" style="left:822px;top:507px;width:89px">-</div>
<div class="c blu r8 d" style="left:911px;top:507px;width:89px">-</div>
<div class="c blu r8 d" style="left:1000px;top:507px;width:89px">-</div>
<div class="c blu r8 d" style="left:1089px;top:507px;width:89px">-</div>
<div class="c blu r8 d" style="left:1178px;top:507px;width:89px">-</div>
<div class="c blu r8 d" style="left:1267px;top:507px;width:89px">-</div>
<div class="c blu r8 d" style="left:1356px;top:507px;width:89px">-</div>
<div class="c blu r8 d" style="left:1445px;top:507px;width:89px">-</div>
<div class="c blu r6" style="left:1534px;top:507px;width:89px;letter-spacing:0.44px">892</div>
<div class="c blu r6" style="left:1623px;top:507px;width:89px;letter-spacing:0.44px">892</div>
<div class="c blu r6" style="left:1712px;top:507px;width:89px;letter-spacing:0.44px">892</div>
<div class="c blu r6" style="left:1801px;top:507px;width:89px;letter-spacing:0.44px">892</div>
<div class="tot" style="top:525px"></div>
<div class="c l red n2" style="left:71px;top:525px;letter-spacing:0.25px">Revenue</div>
<div class="c l red u" style="left:543px;top:525px">USD k</div>
<div class="c red r6" style="left:621px;top:525px;width:91px;letter-spacing:0.35px">23,551</div>
<div class="c red r6" style="left:712px;top:525px;width:91px;letter-spacing:0.32px">27,09,326</div>
<div class="c red r6" style="left:822px;top:525px;width:89px;letter-spacing:0.35px">4,040</div>
<div class="c red r6" style="left:911px;top:525px;width:89px;letter-spacing:0.35px">4,040</div>
<div class="c red r6" style="left:1000px;top:525px;width:89px;letter-spacing:0.35px">4,040</div>
<div class="c red r6" style="left:1089px;top:525px;width:89px;letter-spacing:0.35px">4,040</div>
<div class="c red r6" style="left:1178px;top:525px;width:89px;letter-spacing:0.35px">5,858</div>
<div class="c red r6" style="left:1267px;top:525px;width:89px;letter-spacing:0.35px">5,858</div>
<div class="c red r6" style="left:1356px;top:525px;width:89px;letter-spacing:0.35px">5,917</div>
<div class="c red r6" style="left:1445px;top:525px;width:89px;letter-spacing:0.35px">5,917</div>
<div class="c red r6" style="left:1534px;top:525px;width:89px;letter-spacing:0.35px">14,713</div>
<div class="c red r6" style="left:1623px;top:525px;width:89px;letter-spacing:0.35px">14,713</div>
<div class="c red r6" style="left:1712px;top:525px;width:89px;letter-spacing:0.35px">14,713</div>
<div class="c red r6" style="left:1801px;top:525px;width:89px;letter-spacing:0.35px">14,713</div>
<div class="c l blu" style="left:71px;top:561px;letter-spacing:0.41px">Container direct costs - Existing terminal due</div>
<div class="c l blu u" style="left:543px;top:561px">USD k</div>
<div class="c blu r2" style="left:621px;top:561px;width:91px;letter-spacing:0.3px">(12,600)</div>
<div class="c blu r2" style="left:712px;top:561px;width:91px;letter-spacing:0.29px">(6,09,898)</div>
<div class="c blu r2" style="left:822px;top:561px;width:89px;letter-spacing:0.29px">(1,393)</div>
<div class="c blu r2" style="left:911px;top:561px;width:89px;letter-spacing:0.29px">(1,393)</div>
<div class="c blu r2" style="left:1000px;top:561px;width:89px;letter-spacing:0.29px">(1,393)</div>
<div class="c blu r2" style="left:1089px;top:561px;width:89px;letter-spacing:0.29px">(1,393)</div>
<div class="c blu r2" style="left:1178px;top:561px;width:89px;letter-spacing:0.29px">(3,134)</div>
<div class="c blu r2" style="left:1267px;top:561px;width:89px;letter-spacing:0.29px">(3,134)</div>
<div class="c blu r2" style="left:1356px;top:561px;width:89px;letter-spacing:0.29px">(3,166)</div>
<div class="c blu r2" style="left:1445px;top:561px;width:89px;letter-spacing:0.29px">(3,166)</div>
<div class="c blu r2" style="left:1534px;top:561px;width:89px;letter-spacing:0.29px">(3,261)</div>
<div class="c blu r2" style="left:1623px;top:561px;width:89px;letter-spacing:0.29px">(3,261)</div>
<div class="c blu r2" style="left:1712px;top:561px;width:89px;letter-spacing:0.29px">(3,261)</div>
<div class="c blu r2" style="left:1801px;top:561px;width:89px;letter-spacing:0.29px">(3,261)</div>
<div class="c l blu" style="left:71px;top:579px;letter-spacing:0.43px">Liquid bulk direct costs - Existing terminal due</div>
<div class="c l blu u" style="left:543px;top:579px">USD k</div>
<div class="c blu r2" style="left:621px;top:579px;width:91px;letter-spacing:0.3px">(83)</div>
<div class="c blu r2" style="left:712px;top:579px;width:91px;letter-spacing:0.29px">(5,109)</div>
<div class="c blu r2" style="left:822px;top:579px;width:89px;letter-spacing:0.32px">(279)</div>
<div class="c blu r2" style="left:911px;top:579px;width:89px;letter-spacing:0.32px">(279)</div>
<div class="c blu r2" style="left:1000px;top:579px;width:89px;letter-spacing:0.32px">(279)</div>
<div class="c blu r2" style="left:1089px;top:579px;width:89px;letter-spacing:0.32px">(279)</div>
<div class="c blu r2" style="left:1178px;top:579px;width:89px;letter-spacing:0.3px">(21)</div>
<div class="c blu r2" style="left:1267px;top:579px;width:89px;letter-spacing:0.3px">(21)</div>
<div class="c blu r2" style="left:1356px;top:579px;width:89px;letter-spacing:0.3px">(21)</div>
<div class="c blu r2" style="left:1445px;top:579px;width:89px;letter-spacing:0.3px">(21)</div>
<div class="c blu r2" style="left:1534px;top:579px;width:89px;letter-spacing:0.3px">(22)</div>
<div class="c blu r2" style="left:1623px;top:579px;width:89px;letter-spacing:0.3px">(22)</div>
<div class="c blu r2" style="left:1712px;top:579px;width:89px;letter-spacing:0.3px">(22)</div>
<div class="c blu r2" style="left:1801px;top:579px;width:89px;letter-spacing:0.3px">(22)</div>
<div class="c l blu" style="left:71px;top:597px;letter-spacing:0.41px">Dry bulk direct costs - Existing terminal due</div>
<div class="c l blu u" style="left:543px;top:597px">USD k</div>
<div class="c blu r2" style="left:621px;top:597px;width:91px;letter-spacing:0.3px">(59)</div>
<div class="c blu r2" style="left:712px;top:597px;width:91px;letter-spacing:0.29px">(3,397)</div>
<div class="c blu r2" style="left:822px;top:597px;width:89px;letter-spacing:0.32px">(139)</div>
<div class="c blu r2" style="left:911px;top:597px;width:89px;letter-spacing:0.32px">(139)</div>
<div class="c blu r2" style="left:1000px;top:597px;width:89px;letter-spacing:0.32px">(139)</div>
<div class="c blu r2" style="left:1089px;top:597px;width:89px;letter-spacing:0.32px">(139)</div>
<div class="c blu r2" style="left:1178px;top:597px;width:89px;letter-spacing:0.3px">(15)</div>
<div class="c blu r2" style="left:1267px;top:597px;width:89px;letter-spacing:0.3px">(15)</div>
<div class="c blu r2" style="left:1356px;top:597px;width:89px;letter-spacing:0.3px">(15)</div>
<div class="c blu r2" style="left:1445px;top:597px;width:89px;letter-spacing:0.3px">(15)</div>
<div class="c blu r2" style="left:1534px;top:597px;width:89px;letter-spacing:0.3px">(15)</div>
<div class="c blu r2" style="left:1623px;top:597px;width:89px;letter-spacing:0.3px">(15)</div>
<div class="c blu r2" style="left:1712px;top:597px;width:89px;letter-spacing:0.3px">(15)</div>
<div class="c blu r2" style="left:1801px;top:597px;width:89px;letter-spacing:0.3px">(15)</div>
<div class="c l blu" style="left:71px;top:615px;letter-spacing:0.39px">Break bulk direct costs - Existing terminal due</div>
<div class="c l blu u" style="left:543px;top:615px">USD k</div>
<div class="c blu r2" style="left:621px;top:615px;width:91px;letter-spacing:0.32px">(420)</div>
<div class="c blu r2" style="left:712px;top:615px;width:91px;letter-spacing:0.3px">(20,969)</div>
<div class="c blu r2" style="left:822px;top:615px;width:89px;letter-spacing:0.32px">(209)</div>
<div class="c blu r2" style="left:911px;top:615px;width:89px;letter-spacing:0.32px">(209)</div>
<div class="c blu r2" style="left:1000px;top:615px;width:89px;letter-spacing:0.32px">(209)</div>
<div class="c blu r2" style="left:1089px;top:615px;width:89px;letter-spacing:0.32px">(209)</div>
<div class="c blu r2" style="left:1178px;top:615px;width:89px;letter-spacing:0.32px">(104)</div>
<div class="c blu r2" style="left:1267px;top:615px;width:89px;letter-spacing:0.32px">(104)</div>
<div class="c blu r2" style="left:1356px;top:615px;width:89px;letter-spacing:0.32px">(105)</div>
<div class="c blu r2" style="left:1445px;top:615px;width:89px;letter-spacing:0.32px">(105)</div>
<div class="c blu r2" style="left:1534px;top:615px;width:89px;letter-spacing:0.32px">(109)</div>
<div class="c blu r2" style="left:1623px;top:615px;width:89px;letter-spacing:0.32px">(109)</div>
<div class="c blu r2" style="left:1712px;top:615px;width:89px;letter-spacing:0.32px">(109)</div>
<div class="c blu r2" style="left:1801px;top:615px;width:89px;letter-spacing:0.32px">(109)</div>
<div class="c l blu" style="left:71px;top:633px;letter-spacing:0.39px">Container direct costs - New terminal due</div>
<div class="c l blu u" style="left:543px;top:633px">USD k</div>
<div class="c blu r8 d" style="left:621px;top:633px;width:91px">-</div>
<div class="c blu r2" style="left:712px;top:633px;width:91px;letter-spacing:0.29px">(6,10,814)</div>
<div class="c blu r8 d" style="left:822px;top:633px;width:89px">-</div>
<div class="c blu r8 d" style="left:911px;top:633px;width:89px">-</div>
<div class="c blu r8 d" style="left:1000px;top:633px;width:89px">-</div>
<div class="c blu r8 d" style="left:1089px;top:633px;width:89px">-</div>
<div class="c blu r8 d" style="left:1178px;top:633px;width:89px">-</div>
<div class="c blu r8 d" style="left:1267px;top:633px;width:89px">-</div>
<div class="c blu r8 d" style="left:1356px;top:633px;width:89px">-</div>
<div class="c blu r8 d" style="left:1445px;top:633px;width:89px">-</div>
<div class="c blu r2" style="left:1534px;top:633px;width:89px;letter-spacing:0.29px">(3,366)</div>
<div class="c blu r2" style="left:1623px;top:633px;width:89px;letter-spacing:0.29px">(3,366)</div>
<div class="c blu r2" style="left:1712px;top:633px;width:89px;letter-spacing:0.29px">(3,366)</div>
<div class="c blu r2" style="left:1801px;top:633px;width:89px;letter-spacing:0.29px">(3,366)</div>
<div class="c l blu" style="left:71px;top:651px;letter-spacing:0.42px">Liquid bulk direct costs - New terminal due</div>
<div class="c l blu u" style="left:543px;top:651px">USD k</div>
<div class="c blu r8 d" style="left:621px;top:651px;width:91px">-</div>
<div class="c blu r2" style="left:712px;top:651px;width:91px;letter-spacing:0.29px">(1,22,163)</div>
<div class="c blu r8 d" style="left:822px;top:651px;width:89px">-</div>
<div class="c blu r8 d" style="left:911px;top:651px;width:89px">-</div>
<div class="c blu r8 d" style="left:1000px;top:651px;width:89px">-</div>
<div class="c blu r8 d" style="left:1089px;top:651px;width:89px">-</div>
<div class="c blu r8 d" style="left:1178px;top:651px;width:89px">-</div>
<div class="c blu r8 d" style="left:1267px;top:651px;width:89px">-</div>
<div class="c blu r8 d" style="left:1356px;top:651px;width:89px">-</div>
<div class="c blu r8 d" style="left:1445px;top:651px;width:89px">-</div>
<div class="c blu r2" style="left:1534px;top:651px;width:89px;letter-spacing:0.32px">(673)</div>
<div class="c blu r2" style="left:1623px;top:651px;width:89px;letter-spacing:0.32px">(673)</div>
<div class="c blu r2" style="left:1712px;top:651px;width:89px;letter-spacing:0.32px">(673)</div>
<div class="c blu r2" style="left:1801px;top:651px;width:89px;letter-spacing:0.32px">(673)</div>
<div class="c l blu" style="left:71px;top:669px;letter-spacing:0.39px">Dry bulk direct costs - New terminal due</div>
<div class="c l blu u" style="left:543px;top:669px">USD k</div>
<div class="c blu r8 d" style="left:621px;top:669px;width:91px">-</div>
<div class="c blu r2" style="left:712px;top:669px;width:91px;letter-spacing:0.3px">(61,081)</div>
<div class="c blu r8 d" style="left:822px;top:669px;width:89px">-</div>
<div class="c blu r8 d" style="left:911px;top:669px;width:89px">-</div>
<div class="c blu r8 d" style="left:1000px;top:669px;width:89px">-</div>
<div class="c blu r8 d" style="left:1089px;top:669px;width:89px">-</div>
<div class="c blu r8 d" style="left:1178px;top:669px;width:89px">-</div>
<div class="c blu r8 d" style="left:1267px;top:669px;width:89px">-</div>
<div class="c blu r8 d" style="left:1356px;top:669px;width:89px">-</div>
<div class="c blu r8 d" style="left:1445px;top:669px;width:89px">-</div>
<div class="c blu r2" style="left:1534px;top:669px;width:89px;letter-spacing:0.32px">(337)</div>
<div class="c blu r2" style="left:1623px;top:669px;width:89px;letter-spacing:0.32px">(337)</div>
<div class="c blu r2" style="left:1712px;top:669px;width:89px;letter-spacing:0.32px">(337)</div>
<div class="c blu r2" style="left:1801px;top:669px;width:89px;letter-spacing:0.32px">(337)</div>
<div class="c l blu" style="left:71px;top:687px;letter-spacing:0.37px">Break bulk direct costs - New terminal due</div>
<div class="c l blu u" style="left:543px;top:687px">USD k</div>
<div class="c blu r8 d" style="left:621px;top:687px;width:91px">-</div>
<div class="c blu r2" style="left:712px;top:687px;width:91px;letter-spacing:0.3px">(91,622)</div>
<div class="c blu r8 d" style="left:822px;top:687px;width:89px">-</div>
<div class="c blu r8 d" style="left:911px;top:687px;width:89px">-</div>
<div class="c blu r8 d" style="left:1000px;top:687px;width:89px">-</div>
<div class="c blu r8 d" style="left:1089px;top:687px;width:89px">-</div>
<div class="c blu r8 d" style="left:1178px;top:687px;width:89px">-</div>
<div class="c blu r8 d" style="left:1267px;top:687px;width:89px">-</div>
<div class="c blu r8 d" style="left:1356px;top:687px;width:89px">-</div>
<div class="c blu r8 d" style="left:1445px;top:687px;width:89px">-</div>
<div class="c blu r2" style="left:1534px;top:687px;width:89px;letter-spacing:0.32px">(505)</div>
<div class="c blu r2" style="left:1623px;top:687px;width:89px;letter-spacing:0.32px">(505)</div>
<div class="c blu r2" style="left:1712px;top:687px;width:89px;letter-spacing:0.32px">(505)</div>
<div class="c blu r2" style="left:1801px;top:687px;width:89px;letter-spacing:0.32px">(505)</div>
<div class="tot" style="top:705px"></div>
<div class="c l red" style="left:71px;top:705px;letter-spacing:0.54px">Gross profit</div>
<div class="c l red u" style="left:543px;top:705px">USD k</div>
<div class="c red r6" style="left:621px;top:705px;width:91px;letter-spacing:0.35px">10,388</div>
<div class="c red r6" style="left:712px;top:705px;width:91px;letter-spacing:0.42px">11,84,272</div>
<div class="c red r6" style="left:822px;top:705px;width:89px;letter-spacing:0.35px">2,020</div>
<div class="c red r6" style="left:911px;top:705px;width:89px;letter-spacing:0.35px">2,020</div>
<div class="c red r6" style="left:1000px;top:705px;width:89px;letter-spacing:0.35px">2,020</div>
<div class="c red r6" style="left:1089px;top:705px;width:89px;letter-spacing:0.35px">2,020</div>
<div class="c red r6" style="left:1178px;top:705px;width:89px;letter-spacing:0.35px">2,584</div>
<div class="c red r6" style="left:1267px;top:705px;width:89px;letter-spacing:0.35px">2,584</div>
<div class="c red r6" style="left:1356px;top:705px;width:89px;letter-spacing:0.35px">2,610</div>
<div class="c red r6" style="left:1445px;top:705px;width:89px;letter-spacing:0.35px">2,610</div>
<div class="c red r6" style="left:1534px;top:705px;width:89px;letter-spacing:0.35px">6,425</div>
<div class="c red r6" style="left:1623px;top:705px;width:89px;letter-spacing:0.35px">6,425</div>
<div class="c red r6" style="left:1712px;top:705px;width:89px;letter-spacing:0.35px">6,425</div>
<div class="c red r6" style="left:1801px;top:705px;width:89px;letter-spacing:0.35px">6,425</div>
<div class="c l blu" style="left:71px;top:741px;letter-spacing:0.05px">G&amp;A due</div>
<div class="c l blu u" style="left:543px;top:741px">USD k</div>
<div class="c blu r2" style="left:621px;top:741px;width:91px;letter-spacing:0.29px">(1,286)</div>
<div class="c blu r2" style="left:712px;top:741px;width:91px;letter-spacing:0.3px">(44,742)</div>
<div class="c blu r2" style="left:822px;top:741px;width:89px;letter-spacing:0.32px">(107)</div>
<div class="c blu r2" style="left:911px;top:741px;width:89px;letter-spacing:0.32px">(107)</div>
<div class="c blu r2" style="left:1000px;top:741px;width:89px;letter-spacing:0.32px">(107)</div>
<div class="c blu r2" style="left:1089px;top:741px;width:89px;letter-spacing:0.32px">(107)</div>
<div class="c blu r2" style="left:1178px;top:741px;width:89px;letter-spacing:0.32px">(321)</div>
<div class="c blu r2" style="left:1267px;top:741px;width:89px;letter-spacing:0.32px">(321)</div>
<div class="c blu r2" style="left:1356px;top:741px;width:89px;letter-spacing:0.32px">(321)</div>
<div class="c blu r2" style="left:1445px;top:741px;width:89px;letter-spacing:0.32px">(321)</div>
<div class="c blu r2" style="left:1534px;top:741px;width:89px;letter-spacing:0.32px">(321)</div>
<div class="c blu r2" style="left:1623px;top:741px;width:89px;letter-spacing:0.32px">(321)</div>
<div class="c blu r2" style="left:1712px;top:741px;width:89px;letter-spacing:0.32px">(321)</div>
<div class="c blu r2" style="left:1801px;top:741px;width:89px;letter-spacing:0.32px">(321)</div>
<div class="c l blu" style="left:71px;top:759px;letter-spacing:0.09px">Fuel expenses due</div>
<div class="c l blu u" style="left:543px;top:759px">USD k</div>
<div class="c blu r2" style="left:621px;top:759px;width:91px;letter-spacing:0.29px">(2,086)</div>
<div class="c blu r2" style="left:712px;top:759px;width:91px;letter-spacing:0.3px">(99,947)</div>
<div class="c blu r2" style="left:822px;top:759px;width:89px;letter-spacing:0.32px">(179)</div>
<div class="c blu r2" style="left:911px;top:759px;width:89px;letter-spacing:0.32px">(179)</div>
<div class="c blu r2" style="left:1000px;top:759px;width:89px;letter-spacing:0.32px">(179)</div>
<div class="c blu r2" style="left:1089px;top:759px;width:89px;letter-spacing:0.32px">(179)</div>
<div class="c blu r2" style="left:1178px;top:759px;width:89px;letter-spacing:0.32px">(521)</div>
<div class="c blu r2" style="left:1267px;top:759px;width:89px;letter-spacing:0.32px">(521)</div>
<div class="c blu r2" style="left:1356px;top:759px;width:89px;letter-spacing:0.32px">(521)</div>
<div class="c blu r2" style="left:1445px;top:759px;width:89px;letter-spacing:0.32px">(521)</div>
<div class="c blu r2" style="left:1534px;top:759px;width:89px;letter-spacing:0.32px">(537)</div>
<div class="c blu r2" style="left:1623px;top:759px;width:89px;letter-spacing:0.32px">(537)</div>
<div class="c blu r2" style="left:1712px;top:759px;width:89px;letter-spacing:0.32px">(537)</div>
<div class="c blu r2" style="left:1801px;top:759px;width:89px;letter-spacing:0.32px">(537)</div>
<div class="c l blu" style="left:71px;top:777px;letter-spacing:0.28px">Electricity expenses due</div>
<div class="c l blu u" style="left:543px;top:777px">USD k</div>
<div class="c blu r2" style="left:621px;top:777px;width:91px;letter-spacing:0.32px">(521)</div>
<div class="c blu r2" style="left:712px;top:777px;width:91px;letter-spacing:0.3px">(24,987)</div>
<div class="c blu r2" style="left:822px;top:777px;width:89px;letter-spacing:0.3px">(45)</div>
<div class="c blu r2" style="left:911px;top:777px;width:89px;letter-spacing:0.3px">(45)</div>
<div class="c blu r2" style="left:1000px;top:777px;width:89px;letter-spacing:0.3px">(45)</div>
<div class="c blu r2" style="left:1089px;top:777px;width:89px;letter-spacing:0.3px">(45)</div>
<div class="c blu r2" style="left:1178px;top:777px;width:89px;letter-spacing:0.32px">(130)</div>
<div class="c blu r2" style="left:1267px;top:777px;width:89px;letter-spacing:0.32px">(130)</div>
<div class="c blu r2" style="left:1356px;top:777px;width:89px;letter-spacing:0.32px">(130)</div>
<div class="c blu r2" style="left:1445px;top:777px;width:89px;letter-spacing:0.32px">(130)</div>
<div class="c blu r2" style="left:1534px;top:777px;width:89px;letter-spacing:0.32px">(134)</div>
<div class="c blu r2" style="left:1623px;top:777px;width:89px;letter-spacing:0.32px">(134)</div>
<div class="c blu r2" style="left:1712px;top:777px;width:89px;letter-spacing:0.32px">(134)</div>
<div class="c blu r2" style="left:1801px;top:777px;width:89px;letter-spacing:0.32px">(134)</div>
<div class="c l blu" style="left:71px;top:795px;letter-spacing:0.41px">Maintenance costs due</div>
<div class="c l blu u" style="left:543px;top:795px">USD k</div>
<div class="c blu r2" style="left:621px;top:795px;width:91px;letter-spacing:0.29px">(6,947)</div>
<div class="c blu r2" style="left:712px;top:795px;width:91px;letter-spacing:0.29px">(2,68,227)</div>
<div class="c blu r2" style="left:822px;top:795px;width:89px;letter-spacing:0.32px">(362)</div>
<div class="c blu r2" style="left:911px;top:795px;width:89px;letter-spacing:0.32px">(362)</div>
<div class="c blu r2" style="left:1000px;top:795px;width:89px;letter-spacing:0.32px">(359)</div>
<div class="c blu r2" style="left:1089px;top:795px;width:89px;letter-spacing:0.32px">(356)</div>
<div class="c blu r2" style="left:1178px;top:795px;width:89px;letter-spacing:0.29px">(1,753)</div>
<div class="c blu r2" style="left:1267px;top:795px;width:89px;letter-spacing:0.29px">(1,742)</div>
<div class="c blu r2" style="left:1356px;top:795px;width:89px;letter-spacing:0.29px">(1,731)</div>
<div class="c blu r2" style="left:1445px;top:795px;width:89px;letter-spacing:0.29px">(1,720)</div>
<div class="c blu r2" style="left:1534px;top:795px;width:89px;letter-spacing:0.29px">(1,761)</div>
<div class="c blu r2" style="left:1623px;top:795px;width:89px;letter-spacing:0.29px">(2,512)</div>
<div class="c blu r2" style="left:1712px;top:795px;width:89px;letter-spacing:0.29px">(2,589)</div>
<div class="c blu r2" style="left:1801px;top:795px;width:89px;letter-spacing:0.29px">(2,632)</div>
<div class="c l blu" style="left:71px;top:813px;letter-spacing:0.36px">Insurance due</div>
<div class="c l blu u" style="left:543px;top:813px">USD k</div>
<div class="c blu r2" style="left:621px;top:813px;width:91px;letter-spacing:0.32px">(851)</div>
<div class="c blu r2" style="left:712px;top:813px;width:91px;letter-spacing:0.3px">(23,253)</div>
<div class="c blu r2" style="left:822px;top:813px;width:89px;letter-spacing:0.32px">(173)</div>
<div class="c blu r2" style="left:911px;top:813px;width:89px;letter-spacing:0.32px">(171)</div>
<div class="c blu r2" style="left:1000px;top:813px;width:89px;letter-spacing:0.32px">(169)</div>
<div class="c blu r2" style="left:1089px;top:813px;width:89px;letter-spacing:0.32px">(168)</div>
<div class="c blu r2" style="left:1178px;top:813px;width:89px;letter-spacing:0.32px">(213)</div>
<div class="c blu r2" style="left:1267px;top:813px;width:89px;letter-spacing:0.32px">(213)</div>
<div class="c blu r2" style="left:1356px;top:813px;width:89px;letter-spacing:0.32px">(213)</div>
<div class="c blu r2" style="left:1445px;top:813px;width:89px;letter-spacing:0.32px">(213)</div>
<div class="c blu r2" style="left:1534px;top:813px;width:89px;letter-spacing:0.32px">(207)</div>
<div class="c blu r2" style="left:1623px;top:813px;width:89px;letter-spacing:0.32px">(207)</div>
<div class="c blu r2" style="left:1712px;top:813px;width:89px;letter-spacing:0.32px">(207)</div>
<div class="c blu r2" style="left:1801px;top:813px;width:89px;letter-spacing:0.32px">(207)</div>
<div class="c l blu" style="left:71px;top:831px;letter-spacing:-0.04px">Rent due</div>
<div class="c l blu u" style="left:543px;top:831px">USD k</div>
<div class="c blu r2" style="left:621px;top:831px;width:91px;letter-spacing:0.29px">(1,293)</div>
<div class="c blu r2" style="left:712px;top:831px;width:91px;letter-spacing:0.3px">(63,557)</div>
<div class="c blu r2" style="left:822px;top:831px;width:89px;letter-spacing:0.32px">(515)</div>
<div class="c blu r2" style="left:911px;top:831px;width:89px;letter-spacing:0.32px">(515)</div>
<div class="c blu r2" style="left:1000px;top:831px;width:89px;letter-spacing:0.32px">(515)</div>
<div class="c blu r2" style="left:1089px;top:831px;width:89px;letter-spacing:0.32px">(515)</div>
<div class="c blu r2" style="left:1178px;top:831px;width:89px;letter-spacing:0.32px">(323)</div>
<div class="c blu r2" style="left:1267px;top:831px;width:89px;letter-spacing:0.32px">(323)</div>
<div class="c blu r2" style="left:1356px;top:831px;width:89px;letter-spacing:0.32px">(323)</div>
<div class="c blu r2" style="left:1445px;top:831px;width:89px;letter-spacing:0.32px">(323)</div>
<div class="c blu r2" style="left:1534px;top:831px;width:89px;letter-spacing:0.32px">(333)</div>
<div class="c blu r2" style="left:1623px;top:831px;width:89px;letter-spacing:0.32px">(333)</div>
<div class="c blu r2" style="left:1712px;top:831px;width:89px;letter-spacing:0.32px">(333)</div>
<div class="c blu r2" style="left:1801px;top:831px;width:89px;letter-spacing:0.32px">(333)</div>
<div class="tot" style="top:849px"></div>
<div class="c l red n2" style="left:71px;top:849px;letter-spacing:-0.17px">EBITDA</div>
<div class="c l red u" style="left:543px;top:849px">USD k</div>
<div class="c red r2" style="left:621px;top:849px;width:91px;letter-spacing:0.29px">(2,595)</div>
<div class="c red r6" style="left:712px;top:849px;width:91px;letter-spacing:0.32px">6,59,560</div>
<div class="c red r6" style="left:822px;top:849px;width:89px;letter-spacing:0.44px">639</div>
<div class="c red r6" style="left:911px;top:849px;width:89px;letter-spacing:0.44px">641</div>
<div class="c red r6" style="left:1000px;top:849px;width:89px;letter-spacing:0.44px">646</div>
<div class="c red r6" style="left:1089px;top:849px;width:89px;letter-spacing:0.44px">650</div>
<div class="c red r2" style="left:1178px;top:849px;width:89px;letter-spacing:0.32px">(678)</div>
<div class="c red r2" style="left:1267px;top:849px;width:89px;letter-spacing:0.32px">(667)</div>
<div class="c red r2" style="left:1356px;top:849px;width:89px;letter-spacing:0.32px">(630)</div>
<div class="c red r2" style="left:1445px;top:849px;width:89px;letter-spacing:0.32px">(620)</div>
<div class="c red r6" style="left:1534px;top:849px;width:89px;letter-spacing:0.35px">3,131</div>
<div class="c red r6" style="left:1623px;top:849px;width:89px;letter-spacing:0.35px">2,380</div>
<div class="c red r6" style="left:1712px;top:849px;width:89px;letter-spacing:0.35px">2,304</div>
<div class="c red r6" style="left:1801px;top:849px;width:89px;letter-spacing:0.35px">2,260</div>
<div class="c l blu" style="left:71px;top:885px;letter-spacing:0.47px">Profit / (Loss) from sale of Existing terminal Infrastructure</div>
<div class="c l blu u" style="left:543px;top:885px">USD k</div>
<div class="c blu r8 d" style="left:621px;top:885px;width:91px">-</div>
<div class="c blu r8 d" style="left:712px;top:885px;width:91px">-</div>
<div class="c blu r8 d" style="left:822px;top:885px;width:89px">-</div>
<div class="c blu r8 d" style="left:911px;top:885px;width:89px">-</div>
<div class="c blu r8 d" style="left:1000px;top:885px;width:89px">-</div>
<div class="c blu r8 d" style="left:1089px;top:885px;width:89px">-</div>
<div class="c blu r8 d" style="left:1178px;top:885px;width:89px">-</div>
<div class="c blu r8 d" style="left:1267px;top:885px;width:89px">-</div>
<div class="c blu r8 d" style="left:1356px;top:885px;width:89px">-</div>
<div class="c blu r8 d" style="left:1445px;top:885px;width:89px">-</div>
<div class="c blu r8 d" style="left:1534px;top:885px;width:89px">-</div>
<div class="c blu r8 d" style="left:1623px;top:885px;width:89px">-</div>
<div class="c blu r8 d" style="left:1712px;top:885px;width:89px">-</div>
<div class="c blu r8 d" style="left:1801px;top:885px;width:89px">-</div>
<div class="c l blu" style="left:71px;top:903px;letter-spacing:0.44px">Profit / (Loss) from sale of Existing terminal Buildings</div>
<div class="c l blu u" style="left:543px;top:903px">USD k</div>
<div class="c blu r8 d" style="left:621px;top:903px;width:91px">-</div>
<div class="c blu r8 d" style="left:712px;top:903px;width:91px">-</div>
<div class="c blu r8 d" style="left:822px;top:903px;width:89px">-</div>
<div class="c blu r8 d" style="left:911px;top:903px;width:89px">-</div>
<div class="c blu r8 d" style="left:1000px;top:903px;width:89px">-</div>
<div class="c blu r8 d" style="left:1089px;top:903px;width:89px">-</div>
<div class="c blu r8 d" style="left:1178px;top:903px;width:89px">-</div>
<div class="c blu r8 d" style="left:1267px;top:903px;width:89px">-</div>
<div class="c blu r8 d" style="left:1356px;top:903px;width:89px">-</div>
<div class="c blu r8 d" style="left:1445px;top:903px;width:89px">-</div>
<div class="c blu r8 d" style="left:1534px;top:903px;width:89px">-</div>
<div class="c blu r8 d" style="left:1623px;top:903px;width:89px">-</div>
<div class="c blu r8 d" style="left:1712px;top:903px;width:89px">-</div>
<div class="c blu r8 d" style="left:1801px;top:903px;width:89px">-</div>
<div class="c l blu" style="left:71px;top:921px;letter-spacing:0.39px">Profit / (Loss) from sale of Port equipments</div>
<div class="c l blu u" style="left:543px;top:921px">USD k</div>
<div class="c blu r8 d" style="left:621px;top:921px;width:91px">-</div>
<div class="c blu r8 d" style="left:712px;top:921px;width:91px">-</div>
<div class="c blu r8 d" style="left:822px;top:921px;width:89px">-</div>
<div class="c blu r8 d" style="left:911px;top:921px;width:89px">-</div>
<div class="c blu r8 d" style="left:1000px;top:921px;width:89px">-</div>
<div class="c blu r8 d" style="left:1089px;top:921px;width:89px">-</div>
<div class="c blu r8 d" style="left:1178px;top:921px;width:89px">-</div>
<div class="c blu r8 d" style="left:1267px;top:921px;width:89px">-</div>
<div class="c blu r8 d" style="left:1356px;top:921px;width:89px">-</div>
<div class="c blu r8 d" style="left:1445px;top:921px;width:89px">-</div>
<div class="c blu r8 d" style="left:1534px;top:921px;width:89px">-</div>
<div class="c blu r8 d" style="left:1623px;top:921px;width:89px">-</div>
<div class="c blu r8 d" style="left:1712px;top:921px;width:89px">-</div>
<div class="c blu r8 d" style="left:1801px;top:921px;width:89px">-</div>
<div class="c l blu" style="left:71px;top:939px;letter-spacing:0.54px">Existing terminal Infrastructure depreciation</div>
<div class="c l blu u" style="left:543px;top:939px">USD k</div>
<div class="c blu r2" style="left:621px;top:939px;width:91px;letter-spacing:0.32px">(500)</div>
<div class="c blu r2" style="left:712px;top:939px;width:91px;letter-spacing:0.3px">(15,428)</div>
<div class="c blu r2" style="left:822px;top:939px;width:89px;letter-spacing:0.32px">(108)</div>
<div class="c blu r2" style="left:911px;top:939px;width:89px;letter-spacing:0.32px">(108)</div>
<div class="c blu r2" style="left:1000px;top:939px;width:89px;letter-spacing:0.32px">(108)</div>
<div class="c blu r2" style="left:1089px;top:939px;width:89px;letter-spacing:0.32px">(108)</div>
<div class="c blu r2" style="left:1178px;top:939px;width:89px;letter-spacing:0.32px">(125)</div>
<div class="c blu r2" style="left:1267px;top:939px;width:89px;letter-spacing:0.32px">(125)</div>
<div class="c blu r2" style="left:1356px;top:939px;width:89px;letter-spacing:0.32px">(125)</div>
<div class="c blu r2" style="left:1445px;top:939px;width:89px;letter-spacing:0.32px">(125)</div>
<div class="c blu r2" style="left:1534px;top:939px;width:89px;letter-spacing:0.32px">(125)</div>
<div class="c blu r2" style="left:1623px;top:939px;width:89px;letter-spacing:0.32px">(125)</div>
<div class="c blu r2" style="left:1712px;top:939px;width:89px;letter-spacing:0.32px">(125)</div>
<div class="c blu r2" style="left:1801px;top:939px;width:89px;letter-spacing:0.32px">(125)</div>
<div class="c l blu" style="left:71px;top:957px;letter-spacing:0.51px">Existing terminal Buildings depreciation</div>
<div class="c l blu u" style="left:543px;top:957px">USD k</div>
<div class="c blu r2" style="left:621px;top:957px;width:91px;letter-spacing:0.32px">(460)</div>
<div class="c blu r2" style="left:712px;top:957px;width:91px;letter-spacing:0.3px">(14,243)</div>
<div class="c blu r2" style="left:822px;top:957px;width:89px;letter-spacing:0.32px">(107)</div>
<div class="c blu r2" style="left:911px;top:957px;width:89px;letter-spacing:0.32px">(107)</div>
<div class="c blu r2" style="left:1000px;top:957px;width:89px;letter-spacing:0.32px">(107)</div>
<div class="c blu r2" style="left:1089px;top:957px;width:89px;letter-spacing:0.32px">(107)</div>
<div class="c blu r2" style="left:1178px;top:957px;width:89px;letter-spacing:0.51px">(115)</div>
<div class="c blu r2" style="left:1267px;top:957px;width:89px;letter-spacing:0.51px">(115)</div>
<div class="c blu r2" style="left:1356px;top:957px;width:89px;letter-spacing:0.51px">(115)</div>
<div class="c blu r2" style="left:1445px;top:957px;width:89px;letter-spacing:0.51px">(115)</div>
<div class="c blu r2" style="left:1534px;top:957px;width:89px;letter-spacing:0.51px">(115)</div>
<div class="c blu r2" style="left:1623px;top:957px;width:89px;letter-spacing:0.51px">(115)</div>
<div class="c blu r2" style="left:1712px;top:957px;width:89px;letter-spacing:0.51px">(115)</div>
<div class="c blu r2" style="left:1801px;top:957px;width:89px;letter-spacing:0.51px">(115)</div>
<div class="c l blu" style="left:71px;top:975px;letter-spacing:0.54px">New terminal Infrastructure depreciation</div>
<div class="c l blu u" style="left:543px;top:975px">USD k</div>
<div class="c blu r8 d" style="left:621px;top:975px;width:91px">-</div>
<div class="c blu r2" style="left:712px;top:975px;width:91px;letter-spacing:0.3px">(14,500)</div>
<div class="c blu r8 d" style="left:822px;top:975px;width:89px">-</div>
<div class="c blu r8 d" style="left:911px;top:975px;width:89px">-</div>
<div class="c blu r8 d" style="left:1000px;top:975px;width:89px">-</div>
<div class="c blu r8 d" style="left:1089px;top:975px;width:89px">-</div>
<div class="c blu r8 d" style="left:1178px;top:975px;width:89px">-</div>
<div class="c blu r8 d" style="left:1267px;top:975px;width:89px">-</div>
<div class="c blu r8 d" style="left:1356px;top:975px;width:89px">-</div>
<div class="c blu r8 d" style="left:1445px;top:975px;width:89px">-</div>
<div class="c blu r2" style="left:1534px;top:975px;width:89px;letter-spacing:0.32px">(125)</div>
<div class="c blu r2" style="left:1623px;top:975px;width:89px;letter-spacing:0.32px">(125)</div>
<div class="c blu r2" style="left:1712px;top:975px;width:89px;letter-spacing:0.32px">(125)</div>
<div class="c blu r2" style="left:1801px;top:975px;width:89px;letter-spacing:0.32px">(125)</div>
<div class="c l blu" style="left:71px;top:993px;letter-spacing:0.51px">New terminal Buildings depreciation</div>
<div class="c l blu u" style="left:543px;top:993px">USD k</div>
<div class="c blu r8 d" style="left:621px;top:993px;width:91px">-</div>
<div class="c blu r2" style="left:712px;top:993px;width:91px;letter-spacing:0.29px">(9,667)</div>
<div class="c blu r8 d" style="left:822px;top:993px;width:89px">-</div>
<div class="c blu r8 d" style="left:911px;top:993px;width:89px">-</div>
<div class="c blu r8 d" style="left:1000px;top:993px;width:89px">-</div>
<div class="c blu r8 d" style="left:1089px;top:993px;width:89px">-</div>
<div class="c blu r8 d" style="left:1178px;top:993px;width:89px">-</div>
<div class="c blu r8 d" style="left:1267px;top:993px;width:89px">-</div>
<div class="c blu r8 d" style="left:1356px;top:993px;width:89px">-</div>
<div class="c blu r8 d" style="left:1445px;top:993px;width:89px">-</div>
<div class="c blu r2" style="left:1534px;top:993px;width:89px;letter-spacing:0.3px">(83)</div>
<div class="c blu r2" style="left:1623px;top:993px;width:89px;letter-spacing:0.3px">(83)</div>
<div class="c blu r2" style="left:1712px;top:993px;width:89px;letter-spacing:0.3px">(83)</div>
<div class="c blu r2" style="left:1801px;top:993px;width:89px;letter-spacing:0.3px">(83)</div>
<div class="c l blu" style="left:71px;top:1011px;letter-spacing:0.45px">Port equipments depreciation</div>
<div class="c l blu u" style="left:543px;top:1011px">USD k</div>
<div class="c blu r2" style="left:621px;top:1011px;width:91px;letter-spacing:0.32px">(438)</div>
<div class="c blu r2" style="left:712px;top:1011px;width:91px;letter-spacing:0.3px">(22,909)</div>
<div class="c blu r2" style="left:822px;top:1011px;width:89px;letter-spacing:0.3px">(55)</div>
<div class="c blu r2" style="left:911px;top:1011px;width:89px;letter-spacing:0.3px">(55)</div>
<div class="c blu r2" style="left:1000px;top:1011px;width:89px;letter-spacing:0.3px">(55)</div>
<div class="c blu r2" style="left:1089px;top:1011px;width:89px;letter-spacing:0.3px">(55)</div>
<div class="c blu r2" style="left:1178px;top:1011px;width:89px;letter-spacing:0.51px">(110)</div>
<div class="c blu r2" style="left:1267px;top:1011px;width:89px;letter-spacing:0.51px">(110)</div>
<div class="c blu r2" style="left:1356px;top:1011px;width:89px;letter-spacing:0.51px">(110)</div>
<div class="c blu r2" style="left:1445px;top:1011px;width:89px;letter-spacing:0.51px">(110)</div>
<div class="c blu r2" style="left:1534px;top:1011px;width:89px;letter-spacing:0.51px">(110)</div>
<div class="c blu r2" style="left:1623px;top:1011px;width:89px;letter-spacing:0.32px">(160)</div>
<div class="c blu r2" style="left:1712px;top:1011px;width:89px;letter-spacing:0.32px">(193)</div>
<div class="c blu r2" style="left:1801px;top:1011px;width:89px;letter-spacing:0.32px">(193)</div>
<div style="position:absolute;left:26px;top:361px;width:1868px;height:3px;background:linear-gradient(#bababa 0,#bababa 67%,#dcdcdc 67%)"></div>
<div style="position:absolute;left:821px;top:270px;width:92px;height:21px;border:2px solid #217346;border-top-width:1px"></div>
<div style="position:absolute;left:908px;top:286px;width:6px;height:6px;background:#217346;border-left:1px solid #fff;border-top:1px solid #fff"></div>
<div style="position:absolute;left:822px;top:136px;width:1px;height:888px;background:#a0a0a0"></div>
</div>
<!-- vertical scrollbar -->
<div class="abs" style="left:1895px;top:136px;width:25px;height:888px;background:#e6e6e6"></div>
<div class="abs" style="left:1898px;top:157px;width:19px;height:847px;background:#d6d6d6"></div>
<div class="abs" style="left:1898px;top:138px;width:19px;height:19px;background:#fff;border:1px solid #c0c0c0"></div>
<svg class="abs" style="left:1902px;top:144px" width="11" height="7" viewBox="0 0 11 7"><path d="M0.500 6.500h10L5.500 0.500z" fill="#777"/></svg>
<div class="abs" style="left:1898px;top:157px;width:19px;height:182px;background:#fff;border:1px solid #c0c0c0"></div>
<div class="abs" style="left:1898px;top:1004px;width:19px;height:19px;background:#fff;border:1px solid #c0c0c0"></div>
<svg class="abs" style="left:1902px;top:1011px" width="11" height="7" viewBox="0 0 11 7"><path d="M0.500 0.500h10L5.500 6.500z" fill="#777"/></svg>
<div class="abs" style="left:1894px;top:155px;width:1px;height:869px;background:#a0a0a0"></div>
<div class="abs" style="left:0;top:1023px;width:1895px;height:1px;background:#a0a0a0"></div>
<!-- SHEET TABS -->
<div id="tabs">
<svg class="abs" style="left:27px;top:8px" width="7" height="11" viewBox="0 0 7 11"><path d="M6.500 0.500v10L0.500 5.500z" fill="#c6c6c6"/></svg>
<svg class="abs" style="left:56px;top:8px" width="7" height="11" viewBox="0 0 7 11"><path d="M0.500 0.500v10l6-5z" fill="#1e6b3e"/></svg>
<div class="sep" style="left:103px"></div>
<div class="st" style="left:106px;width:65px;background:#953735;color:#fff">Cover</div>
<div class="sep" style="left:173px"></div>
<div class="st" style="left:176px;width:103px;background:#953735;color:#fff">Disclaimer</div>
<div class="sep" style="left:281px"></div>
<div class="st" style="left:284px;width:48px;background:#953735;color:#fff">Key</div>
<div class="sep" style="left:334px"></div>
<div class="st" style="left:337px;width:49px;background:#ccffff">Log</div>
<div class="sep" style="left:388px"></div>
<div class="st" style="left:391px;width:106px;background:#31749b;color:#fff">Dashboard</div>
<div class="st" style="left:499px;top:-1px;width:82px;height:26px;background:linear-gradient(#fff 30%,#b9cdd9);border-left:1px solid #a0a0a0;border-right:1px solid #a0a0a0;border-bottom:2px solid #217346;color:#217346;font-weight:bold;font-size:16.600px;line-height:24px">FinStat</div>
<div class="st" style="left:583px;width:77px;background:#ffffcc">Actuals</div>
<div class="sep" style="left:662px"></div>
<div class="st" style="left:665px;width:69px;background:#ffffcc">Inputs</div>
<div class="sep" style="left:736px"></div>
<div class="st" style="left:739px;width:82px;background:#bfbfbf">Convert</div>
<div class="sep" style="left:823px"></div>
<div class="st" style="left:826px;width:60px;background:#bfbfbf">Flags</div>
<div class="sep" style="left:888px"></div>
<div class="st" style="left:891px;width:98px;background:#bfbfbf">Escalation</div>
<div class="sep" style="left:991px"></div>
<div class="st" style="left:994px;width:80px;background:#bfbfbf">Volume</div>
<div class="sep" style="left:1076px"></div>
<div class="st" style="left:1084px;width:16px;color:#1e6b3e;font-weight:bold;font-size:15px">...</div>
<svg class="abs" style="left:1110px;top:3px" width="22" height="22" viewBox="0 0 22 22" fill="none" stroke="#777" stroke-width="1.300"><circle cx="11" cy="11" r="9.500"/><path d="M11 6v10M6 11h10" stroke-width="2"/></svg>
<svg class="abs" style="left:1148px;top:6px" width="5" height="16" viewBox="0 0 5 16" fill="#b0b0b0"><rect x="0.800" y="0.800" width="3.400" height="3.200"/><rect x="0.800" y="6" width="3.400" height="3.200"/><rect x="0.800" y="11.200" width="3.400" height="3.200"/></svg>
<div class="abs" style="left:1167px;top:4px;width:726px;height:19px;background:#d6d6d6"></div>
<div class="abs" style="left:1167px;top:4px;width:19px;height:19px;background:#fff;border:1px solid #c0c0c0"></div>
<svg class="abs" style="left:1173px;top:8px" width="7" height="11" viewBox="0 0 7 11"><path d="M6.500 0.500v10L0.500 5.500z" fill="#666"/></svg>
<div class="abs" style="left:1186px;top:4px;width:75px;height:19px;background:#fff;border:1px solid #c0c0c0"></div>
<div class="abs" style="left:1874px;top:4px;width:19px;height:19px;background:#fff;border:1px solid #c0c0c0"></div>
<svg class="abs" style="left:1881px;top:8px" width="7" height="11" viewBox="0 0 7 11"><path d="M0.500 0.500v10l6-5z" fill="#666"/></svg>
</div>
<!-- STATUS BAR -->
<div id="status">
<div class="abs" style="left:9px;top:0;line-height:29px;font-size:12.3px">Ready</div>
<svg class="abs" style="left:70px;top:6px" width="19" height="16" viewBox="0 0 19 16" fill="none" stroke="#555" stroke-width="1.300"><path d="M1 15V1h16v5"/><path d="M1 4h16M3.500 7h3M3.500 10h3M3.500 13h3"/><circle cx="13" cy="11" r="4.300"/><circle cx="13" cy="11" r="1.700" fill="#555"/></svg>
<div class="abs" style="left:1555px;top:0;width:50px;height:25px;background:#c8c8c8"></div>
<svg class="abs" style="left:1571px;top:5px" width="17" height="16" viewBox="0 0 17 16" fill="none" stroke="#555" stroke-width="1.700"><rect x="0.900" y="0.900" width="15.200" height="14.200"/><path d="M0.900 5.600h15.200M0.900 10.400h15.200M6 0.900v14.200M11 0.900v14.200"/></svg>
<svg class="abs" style="left:1621px;top:5px" width="18" height="16" viewBox="0 0 18 16" fill="none" stroke="#555" stroke-width="1.300"><rect x="0.700" y="0.700" width="16.600" height="14.600"/><rect x="4.500" y="3.500" width="9" height="9"/><path d="M6.500 6h5M6.500 8h5M6.500 10h5"/></svg>
<svg class="abs" style="left:1671px;top:5px" width="18" height="16" viewBox="0 0 18 16" fill="none" stroke="#555" stroke-width="1.300"><rect x="0.700" y="0.700" width="16.600" height="14.600"/><path d="M4.500 0.700V8h9V0.700M9 0.700V8"/></svg>
<div class="abs" style="left:1711px;top:12px;width:11px;height:1px;background:#555"></div>
<div class="abs" style="left:1728px;top:12px;width:124px;height:1px;background:#a0a0a0"></div>
<div class="abs" style="left:1790px;top:9px;width:1px;height:7px;background:#a0a0a0"></div>
<div class="abs" style="left:1775px;top:5px;width:6px;height:14px;background:#777"></div>
<div class="abs" style="left:1859px;top:12px;width:11px;height:1px;background:#555"></div>
<div class="abs" style="left:1864px;top:7px;width:1px;height:11px;background:#555"></div>
<div class="abs" style="left:1884px;top:0;line-height:27px;font-size:13px;color:#555">80%</div>
</div>
<!-- bottom dark strip -->
<div class="abs" style="left:0;top:1078px;width:1920px;height:2px;background:#333"></div>
<div class="abs" style="left:60px;top:1078px;width:430px;height:2px;background:#e4e4e4"></div>
<div class="abs" style="left:865px;top:1078px;width:55px;height:2px;background:#6e6e6e"></div>
</div></body></html>
